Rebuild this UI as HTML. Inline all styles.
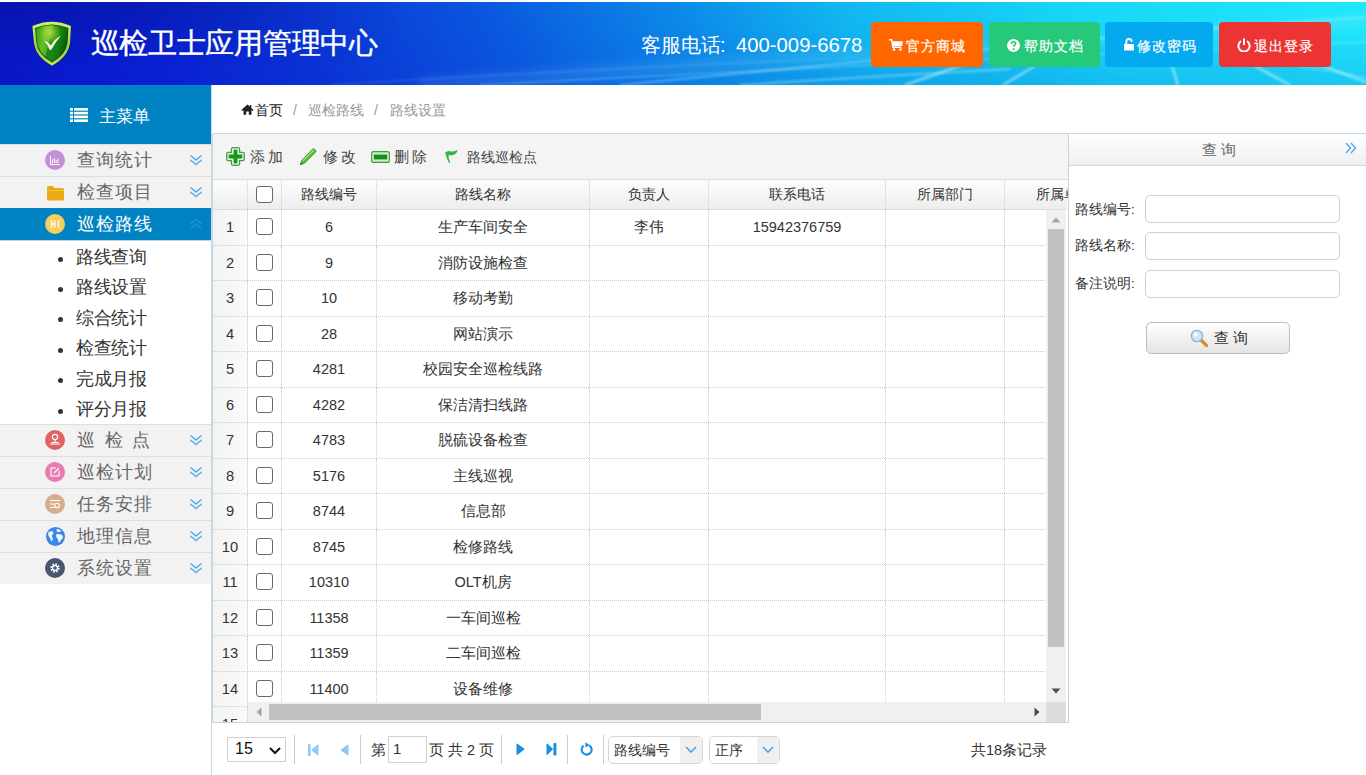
<!DOCTYPE html>
<html><head><meta charset="utf-8"><style>
*{margin:0;padding:0;box-sizing:border-box}
html,body{width:1366px;height:775px;overflow:hidden;background:#fff;font-family:"Liberation Sans",sans-serif;color:#333}
.abs{position:absolute}
#hdr{position:absolute;left:0;top:2px;width:1366px;height:83px;overflow:hidden;
 background:linear-gradient(60deg,#0818c8 1.7%,#0a20d2 12%,#0a32d4 22.9%,#0a56de 37.1%,#0c8ae8 51.2%,#12b6f1 62.5%,#18d6f7 78.8%,#20e6fb 98.3%)}
#hdr .title{position:absolute;left:90.5px;top:21px;font-size:28.5px;letter-spacing:-0.28px;-webkit-text-stroke:0.35px #fff;color:#fff;white-space:nowrap;line-height:40px}
#hdr .phone{position:absolute;left:641px;top:30.5px;font-size:20.3px;color:#fff;white-space:nowrap;line-height:24px}
.hbtn{position:absolute;top:20px;height:45px;border-radius:4px;color:#fff;font-size:14px;line-height:49px;white-space:nowrap}
.hbtn span{position:absolute;top:0;-webkit-text-stroke:0.2px #fff;letter-spacing:0.9px}
.hbtn svg{position:absolute}
#side{position:absolute;left:0;top:85px;width:212px;height:690px;background:#fff;border-right:1px solid #c9dbe6}
.mhead{position:absolute;left:0;top:0;width:211px;height:59px;background:#0082c3;color:#fff;font-size:17.3px}
.mi{position:absolute;left:0;width:211px;height:32px;background:#f2f2f2;border-top:1px solid #dedede;color:#666;font-size:17.5px;letter-spacing:1px}
.mi .ic{position:absolute;left:45px;top:5px;width:20px;height:20px;border-radius:50%}
.mi .tx{position:absolute;left:77px;top:0;line-height:31px;white-space:nowrap}
.mi .ch{position:absolute;left:189px;top:9px;width:14px;height:12px}
.mi.act{background:#0082c3;color:#fff;border-top:1px solid #0082c3;border-bottom:1px solid #b9d3e0;height:33px}
.sub{position:absolute;left:76px;font-size:18px;letter-spacing:-0.4px;color:#333;white-space:nowrap;line-height:30px}
.sub:before{content:"";position:absolute;left:-18px;top:14.5px;width:5px;height:5px;border-radius:50%;background:#333}
#crumb{position:absolute;left:213px;top:85px;width:1153px;height:49px;border-bottom:1px solid #c5d6e2;font-size:14px;line-height:51px}
#crumb .home{position:absolute;left:28px;top:19px}
#crumb span{position:absolute;top:0;white-space:nowrap}
#grid{position:absolute;left:212px;top:134px;width:857px;height:589px;border-left:1px solid #c5d6e2;border-right:1px solid #d0d0d0;border-bottom:1px solid #d0d0d0;overflow:hidden}
#tb{position:absolute;left:0;top:0;width:856px;height:46px;background:#f4f4f4;border-bottom:1px solid #dddddd;font-size:14.5px;color:#444}
#tb span{position:absolute;top:14px;line-height:18px;white-space:nowrap;letter-spacing:3px}
#gh{position:absolute;left:0;top:46px;width:854px;height:30px;background:linear-gradient(#fdfdfd,#ededed);border-bottom:1px solid #dcdcdc;font-size:14px;color:#333}
.gc{position:absolute;top:0;height:100%;border-right:1px dotted #ccc;text-align:center;white-space:nowrap;overflow:hidden}
#gh .gc{line-height:29px}
.row{position:absolute;left:35px;width:799px;height:35.5px;border-bottom:1px dotted #ccc;font-size:14.5px;color:#333}
.row .gc{line-height:34px}
.rn{position:absolute;left:0;width:35px;height:35.5px;border-bottom:1px dotted #ccc;border-right:1px dotted #ccc;background:linear-gradient(90deg,#f3f3f3,#fafafa);font-size:14.7px;color:#333;line-height:34px;text-align:center}
.ck{position:absolute;left:8px;width:17px;height:17px;border:1.6px solid #6a6a6a;border-radius:3px;background:#fff}
#sp{position:absolute;left:1069px;top:134px;width:297px;height:641px;background:#fff}
#sp .ph{position:absolute;left:0;top:0;width:297px;height:32px;background:linear-gradient(#ffffff,#efefef);border-bottom:1px solid #d4d4d4;text-align:center;font-size:14.5px;color:#666;line-height:33px;letter-spacing:4px;text-indent:6px}
#sp .lb{position:absolute;left:6px;font-size:13.5px;color:#333;white-space:nowrap;line-height:16px}
#sp .ip{position:absolute;left:76px;width:195px;height:28px;border:1px solid #cfcfcf;border-radius:5px;background:#fff}
#sp .btn{position:absolute;left:77px;top:188px;width:144px;height:32px;border:1px solid #bdbdbd;border-radius:5px;background:linear-gradient(#ffffff,#e4e4e4);font-size:14.5px;color:#333;letter-spacing:4px}
#pg{position:absolute;left:213px;top:723px;width:855px;height:52px;font-size:14.5px;color:#333}
#pg .sep{position:absolute;top:12px;width:1px;height:29px;background:#ccc}
#pg span{position:absolute;top:18px;line-height:18px;white-space:nowrap}
.cb{position:absolute;top:13px;height:28px;border:1px solid #d6d6d6;border-radius:5px;background:#fff;overflow:hidden}
.cb .arr{position:absolute;right:0;top:0;width:22px;height:100%;background:#f0f0f0}
</style></head><body>
<div id="hdr"><div class="abs" style="left:600px;top:0;width:766px;height:83px;background:linear-gradient(to bottom,rgba(0,60,200,0) 30%,rgba(0,60,200,0.16) 100%);-webkit-mask-image:linear-gradient(to right,transparent 0%,#000 45%)"></div><div class="abs" style="left:0;top:0;width:400px;height:83px;background:linear-gradient(to bottom,rgba(0,0,60,0.2) 0%,rgba(0,0,60,0) 75%);-webkit-mask-image:linear-gradient(to right,#000 40%,transparent 100%)"></div><svg class="abs" style="left:0;top:0" width="1366" height="83" viewBox="0 0 1366 83">
<defs><filter id="bl" x="-10%" y="-50%" width="120%" height="200%"><feGaussianBlur stdDeviation="1.1"/></filter>
<filter id="bl2" x="-10%" y="-50%" width="120%" height="200%"><feGaussianBlur stdDeviation="5"/></filter></defs>
<g fill="none" stroke="#c8f6ff">
<path d="M420 83 Q800 55 1366 20" stroke-width="14" opacity="0.10" filter="url(#bl2)"/>
<path d="M480 83 Q760 68 1010 56 T1366 40" stroke-width="1.5" opacity="0.30" filter="url(#bl)"/>
<path d="M620 83 Q820 64 1010 45 T1366 15" stroke-width="2.2" opacity="0.35" filter="url(#bl)"/>
<path d="M740 83 Q880 74 1010 67" stroke-width="2.5" opacity="0.35" filter="url(#bl)"/>
<path d="M330 83 Q600 66 900 54" stroke-width="1.2" opacity="0.18" filter="url(#bl)"/>
<g opacity="0.55" stroke-width="2.6" filter="url(#bl)">
<path d="M905 83 L965 62"/>
<path d="M1003 83 L1035 64"/>
<path d="M1178 83 L1172 64"/>
<path d="M1290 83 L1255 64"/>
<path d="M1366 80 L1318 62"/>
</g>
<path d="M1300 64 Q1340 70 1366 76" stroke-width="2" opacity="0.3" filter="url(#bl)"/>
</g></svg><svg class="abs" style="left:31px;top:17px" width="42" height="49" viewBox="0 0 42 49">
<defs>
<linearGradient id="sg1" x1="0" y1="0" x2="1" y2="0.3"><stop offset="0" stop-color="#2f9d1c"/><stop offset="0.35" stop-color="#62c028"/><stop offset="0.5" stop-color="#4cb022"/><stop offset="0.52" stop-color="#1e8a14"/><stop offset="0.8" stop-color="#148012"/><stop offset="1" stop-color="#0c5e0c"/></linearGradient>
<linearGradient id="sg2" x1="0" y1="0" x2="0" y2="1"><stop offset="0" stop-color="#d4ee70"/><stop offset="0.6" stop-color="#9ad23a"/><stop offset="1" stop-color="#c0e060"/></linearGradient>
<radialGradient id="sg3" cx="0.45" cy="0.2" r="0.35"><stop offset="0" stop-color="#b8e040" stop-opacity="0.9"/><stop offset="1" stop-color="#b8e040" stop-opacity="0"/></radialGradient>
</defs>
<path d="M1.4 7 Q21 -1.5 40 7 L39 24 Q37 38 21 46.7 Q5 38 3 24 Z" fill="#06104a" opacity="0.45" transform="translate(0.3,1.2)"/>
<path d="M1.4 7 Q21 -1.5 40 7 L39 24 Q37 38 21 46.7 Q5 38 3 24 Z" fill="url(#sg2)"/>
<path d="M4 9 Q21 1.8 37.4 9 L36.5 24 Q34.8 35.8 21 43.6 Q7.2 35.8 5.5 24 Z" fill="#0f4a0c"/>
<path d="M4.9 9.7 Q21 2.8 36.5 9.7 L35.7 24 Q34 35 21 42.5 Q8 35 6.3 24 Z" fill="url(#sg1)"/>
<path d="M4.9 9.7 Q21 2.8 36.5 9.7 L35.7 24 Q34 35 21 42.5 Q8 35 6.3 24 Z" fill="url(#sg3)"/>
<path d="M13 21.8 Q16.5 22 19.8 26.6 Q23.5 20 30 16.6 Q25 22.5 20.2 31 L18.6 31 Q16.5 25 13 21.8 Z" fill="#f2f6d6"/>
</svg>
 <div class="title">巡检卫士应用管理中心</div>
 <div class="phone">客服电话<span style="position:absolute;left:79px;top:0">:</span><span style="position:absolute;left:95px;top:0">400-009-6678</span></div>
 <div class="hbtn" style="left:871px;width:112px;background:#ff6600"><svg style="left:18px;top:17px" width="14" height="12" viewBox="0 0 14 12"><path d="M0 0.8 H2.6 L4 8.2 H12.5" fill="none" stroke="#fff" stroke-width="1.5"/><path d="M3.2 2.2 H14 L13.2 7 H4.1 Z" fill="#fff"/><circle cx="5" cy="10.6" r="1.3" fill="#fff"/><circle cx="11.5" cy="10.6" r="1.3" fill="#fff"/></svg><span style="left:35px">官方商城</span></div>
 <div class="hbtn" style="left:989px;width:111px;background:#26c97a"><svg style="left:18px;top:17px" width="13" height="13" viewBox="0 0 13 13"><circle cx="6.5" cy="6.5" r="6.5" fill="#fff"/><path d="M4.4 4.9 Q4.4 2.8 6.5 2.8 Q8.6 2.8 8.6 4.6 Q8.6 5.7 7.4 6.3 Q6.6 6.7 6.6 7.8" fill="none" stroke="#26c97a" stroke-width="1.6"/><circle cx="6.6" cy="9.9" r="1" fill="#26c97a"/></svg><span style="left:35px">帮助文档</span></div>
 <div class="hbtn" style="left:1105px;width:108px;background:#04a9ef"><svg style="left:19px;top:16px" width="10" height="13" viewBox="0 0 10 13"><path d="M2.3 6 V3.8 Q2.3 1 5 1 Q7.7 1 7.7 3.8" fill="none" stroke="#fff" stroke-width="1.8"/><rect x="0" y="6" width="10" height="6.5" fill="#fff"/></svg><span style="left:32px">修改密码</span></div>
 <div class="hbtn" style="left:1219px;width:112px;background:#ec3434"><svg style="left:18px;top:16px" width="14" height="14" viewBox="0 0 14 14"><path d="M4 3.2 A5.6 5.6 0 1 0 10 3.2" fill="none" stroke="#fff" stroke-width="2"/><path d="M7 0.5 V7" stroke="#fff" stroke-width="2"/></svg><span style="left:35px">退出登录</span></div>
</div>
<div id="side"><div class="mhead"><svg class="abs" style="left:70px;top:23px" width="18" height="14" viewBox="0 0 18 14"><g fill="#fff"><rect x="0" y="0" width="3" height="2.6"/><rect x="4" y="0" width="14" height="2.6"/><rect x="0" y="3.8" width="3" height="2.6"/><rect x="4" y="3.8" width="14" height="2.6"/><rect x="0" y="7.6" width="3" height="2.6"/><rect x="4" y="7.6" width="14" height="2.6"/><rect x="0" y="11.4" width="3" height="2.6"/><rect x="4" y="11.4" width="14" height="2.6"/></g></svg><span class="abs" style="left:99px;top:17px;line-height:28px;white-space:nowrap">主菜单</span></div><div class="mi" style="top:59px"><div class="ic" style="background:#c48fd4"><svg class="abs" style="left:5px;top:5px" width="10" height="10" viewBox="0 0 10 10"><path d="M0.5 1 V9.5 H9.5 M2.5 4.5 V8 M4.3 3 V8 M6.1 5 V8 M7.9 3.5 V8" stroke="#fff" stroke-width="1" fill="none"/></svg></div><span class="tx">查询统计</span><svg class="ch" viewBox="0 0 14 12"><path d="M1.5 1.5 L7 6 L12.5 1.5 M1.5 6 L7 10.5 L12.5 6" fill="none" stroke="#55abea" stroke-width="1.6"/></svg></div><div class="mi" style="top:91px"><svg class="abs" style="left:46px;top:8px" width="19" height="16" viewBox="0 0 19 16"><path d="M1 2.5 Q1 1 2.5 1 H7 L8.5 3 H16.5 Q18 3 18 4.5 V14 Q18 15.5 16.5 15.5 H2.5 Q1 15.5 1 14 Z" fill="#e9ab12"/><path d="M1 5.5 H18" stroke="#f6c84a" stroke-width="0.8"/></svg><span class="tx">检查项目</span><svg class="ch" viewBox="0 0 14 12"><path d="M1.5 1.5 L7 6 L12.5 1.5 M1.5 6 L7 10.5 L12.5 6" fill="none" stroke="#55abea" stroke-width="1.6"/></svg></div><div class="mi act" style="top:123px"><div class="ic" style="background:#f5cf5a"><svg class="abs" style="left:5px;top:5px" width="10" height="10" viewBox="0 0 10 10"><path d="M1.5 1 V9 M5 1 V9 M8.5 1 V9 M3.2 3 V7" stroke="#fff" stroke-width="1.1" fill="none"/></svg></div><span class="tx">巡检路线</span><svg class="ch" viewBox="0 0 14 12"><path d="M1.5 10.5 L7 6 L12.5 10.5 M1.5 6 L7 1.5 L12.5 6" fill="none" stroke="#1a95d6" stroke-width="1.5"/></svg></div><div class="sub" style="top:157.0px">路线查询</div><div class="sub" style="top:187.4px">路线设置</div><div class="sub" style="top:217.8px">综合统计</div><div class="sub" style="top:248.2px">检查统计</div><div class="sub" style="top:278.6px">完成月报</div><div class="sub" style="top:309.0px">评分月报</div><div class="mi" style="top:339px"><div class="ic" style="background:#de6462"><svg class="abs" style="left:4px;top:3px" width="12" height="13" viewBox="0 0 12 13"><circle cx="6" cy="4" r="2.6" fill="none" stroke="#fff" stroke-width="1.1"/><path d="M6 6.6 V9 M1 11 H11 M2.5 9.5 H9.5" stroke="#fff" stroke-width="1.1"/></svg></div><span class="tx"><span style="letter-spacing:9.5px">巡检点</span></span><svg class="ch" viewBox="0 0 14 12"><path d="M1.5 1.5 L7 6 L12.5 1.5 M1.5 6 L7 10.5 L12.5 6" fill="none" stroke="#55abea" stroke-width="1.6"/></svg></div><div class="mi" style="top:371px"><div class="ic" style="background:#e67cb0"><svg class="abs" style="left:5px;top:5px" width="10" height="10" viewBox="0 0 10 10"><path d="M6 1 H1 V9 H9 V4" fill="none" stroke="#fff" stroke-width="1.1"/><path d="M4 6 L9 1" stroke="#fff" stroke-width="1.1"/></svg></div><span class="tx">巡检计划</span><svg class="ch" viewBox="0 0 14 12"><path d="M1.5 1.5 L7 6 L12.5 1.5 M1.5 6 L7 10.5 L12.5 6" fill="none" stroke="#55abea" stroke-width="1.6"/></svg></div><div class="mi" style="top:403px"><div class="ic" style="background:#d6ac8c"><svg class="abs" style="left:4px;top:5px" width="12" height="10" viewBox="0 0 12 10"><path d="M1 1.5 H11 M1 5 H5 M1 8.5 H5" stroke="#fff" stroke-width="1.1"/><circle cx="8" cy="6.5" r="2.3" fill="none" stroke="#fff" stroke-width="1.1"/></svg></div><span class="tx">任务安排</span><svg class="ch" viewBox="0 0 14 12"><path d="M1.5 1.5 L7 6 L12.5 1.5 M1.5 6 L7 10.5 L12.5 6" fill="none" stroke="#55abea" stroke-width="1.6"/></svg></div><div class="mi" style="top:435px"><svg class="abs" style="left:45.5px;top:5.5px" width="19" height="19" viewBox="0 0 20 20"><circle cx="10" cy="10" r="10" fill="#3a86ea"/><path d="M2.5 5.5 Q5 3.5 7.5 5 Q8.5 6.5 7 8 Q5.5 8.5 6.5 10.5 Q8 12 6.5 14.5 Q5.5 16 5 13.5 Q4.5 11 3 10 Q2 8 2.5 5.5 Z M11 2.2 Q14 2 16 4 Q15.5 5.5 13.5 5 Q12 6 11.5 4.5 Z M10.5 8 Q13 6.5 16 8 Q18.5 9.5 17.5 12 Q16 12.5 15.5 14.5 Q14 17 13 16 Q13.5 13.5 12 12 Q10.5 11 10.5 8 Z" fill="#f4f8ff"/></svg><span class="tx">地理信息</span><svg class="ch" viewBox="0 0 14 12"><path d="M1.5 1.5 L7 6 L12.5 1.5 M1.5 6 L7 10.5 L12.5 6" fill="none" stroke="#55abea" stroke-width="1.6"/></svg></div><div class="mi" style="top:467px"><div class="ic" style="background:#4a566e"><svg class="abs" style="left:4px;top:4px" width="12" height="12" viewBox="0 0 12 12"><circle cx="6" cy="6" r="3.6" fill="none" stroke="#fff" stroke-width="2.2" stroke-dasharray="1.6 1.2"/><circle cx="6" cy="6" r="2.4" fill="none" stroke="#fff" stroke-width="1.2"/></svg></div><span class="tx">系统设置</span><svg class="ch" viewBox="0 0 14 12"><path d="M1.5 1.5 L7 6 L12.5 1.5 M1.5 6 L7 10.5 L12.5 6" fill="none" stroke="#55abea" stroke-width="1.6"/></svg></div></div>
<div id="crumb"><svg class="home" width="13" height="11" viewBox="0 0 13 11"><path d="M6.5 0.5 L0.3 6 L1.5 7 L2.5 6.1 V10.8 H5.2 V7.6 H7.8 V10.8 H10.5 V6.1 L11.5 7 L12.7 6 L10.3 3.9 V1 H8.8 V2.6 Z" fill="#222"/></svg><span style="left:42px;color:#222">首页</span><span style="left:80px;color:#999">/</span><span style="left:95px;color:#999">巡检路线</span><span style="left:161px;color:#999">/</span><span style="left:177px;color:#999">路线设置</span></div>
<div id="grid"><div id="tb">
<svg class="abs" style="left:13px;top:12.5px" width="19" height="19" viewBox="0 0 19 19"><path d="M5.4 2.4 Q5.4 0.7 7.1 0.7 H11.9 Q13.6 0.7 13.6 2.4 V5.4 H16.6 Q18.3 5.4 18.3 7.1 V11.9 Q18.3 13.6 16.6 13.6 H13.6 V16.6 Q13.6 18.3 11.9 18.3 H7.1 Q5.4 18.3 5.4 16.6 V13.6 H2.4 Q0.7 13.6 0.7 11.9 V7.1 Q0.7 5.4 2.4 5.4 H5.4 Z" fill="#e4f2e0" stroke="#4f9a48" stroke-width="1.3"/><path d="M7.6 3.4 Q7.6 2.6 8.4 2.6 H10.6 Q11.4 2.6 11.4 3.4 V7.6 H15.6 Q16.4 7.6 16.4 8.4 V10.6 Q16.4 11.4 15.6 11.4 H11.4 V15.6 Q11.4 16.4 10.6 16.4 H8.4 Q7.6 16.4 7.6 15.6 V11.4 H3.4 Q2.6 11.4 2.6 10.6 V8.4 Q2.6 7.6 3.4 7.6 H7.6 Z" fill="#129a1c"/></svg>
<span style="left:37px">添加</span>
<svg class="abs" style="left:86px;top:14px" width="18" height="18" viewBox="0 0 18 18"><path d="M13.6 1.2 Q14.5 0.4 15.4 1.2 L16.6 2.4 Q17.4 3.3 16.6 4.1 L5.6 15.1 L1.2 16.8 L2.9 12.4 Z" fill="#56c23a" stroke="#2f8a2a" stroke-width="0.9"/><path d="M4 12.6 L14.6 2" stroke="#a6e870" stroke-width="1.1"/><path d="M1.2 16.8 L2.2 14.2 L3.8 15.8 Z" fill="#3a7a30"/></svg>
<span style="left:110px">修改</span>
<svg class="abs" style="left:158px;top:16.7px" width="19" height="12" viewBox="0 0 19 12"><rect x="0.6" y="0.6" width="17.8" height="10.8" rx="2" fill="#cfe9c9" stroke="#3f9a3f" stroke-width="1.1"/><rect x="2.8" y="3.6" width="13.4" height="4.8" fill="#11911a"/></svg>
<span style="left:181px">删除</span>
<svg class="abs" style="left:231px;top:15px" width="15" height="16" viewBox="0 0 15 16"><path d="M1.2 3.6 Q3.5 1.2 6.5 2.2 Q9.5 3.2 13.8 0.8 Q12.5 5.5 8.6 6.2 Q6 6.6 4.6 6 Q4 9 6.2 13.5 L5.2 14.2 Q2.2 9.5 1.2 3.6 Z" fill="#33b840"/></svg>
<span style="left:254px;letter-spacing:0;font-size:14px">路线巡检点</span>
</div><div id="gh"><div class="gc" style="left:0px;width:35px"></div><div class="gc" style="left:35px;width:34px"><div class="ck" style="top:5.5px"></div></div><div class="gc" style="left:69px;width:95px">路线编号</div><div class="gc" style="left:164px;width:213px">路线名称</div><div class="gc" style="left:377px;width:119px">负责人</div><div class="gc" style="left:496px;width:177px">联系电话</div><div class="gc" style="left:673px;width:119px">所属部门</div><div class="gc" style="left:792px;width:119px">所属单位</div></div><div class="rn" style="top:76.0px">1</div><div class="row" style="top:76.0px"><div class="gc" style="left:0px;width:34px"><div class="ck" style="top:8px"></div></div><div class="gc" style="left:34px;width:95px">6</div><div class="gc" style="left:129px;width:213px">生产车间安全</div><div class="gc" style="left:342px;width:119px">李伟</div><div class="gc" style="left:461px;width:177px">15942376759</div><div class="gc" style="left:638px;width:119px"></div><div class="gc" style="left:757px;width:119px"></div></div><div class="rn" style="top:111.5px">2</div><div class="row" style="top:111.5px"><div class="gc" style="left:0px;width:34px"><div class="ck" style="top:8px"></div></div><div class="gc" style="left:34px;width:95px">9</div><div class="gc" style="left:129px;width:213px">消防设施检查</div><div class="gc" style="left:342px;width:119px"></div><div class="gc" style="left:461px;width:177px"></div><div class="gc" style="left:638px;width:119px"></div><div class="gc" style="left:757px;width:119px"></div></div><div class="rn" style="top:147.0px">3</div><div class="row" style="top:147.0px"><div class="gc" style="left:0px;width:34px"><div class="ck" style="top:8px"></div></div><div class="gc" style="left:34px;width:95px">10</div><div class="gc" style="left:129px;width:213px">移动考勤</div><div class="gc" style="left:342px;width:119px"></div><div class="gc" style="left:461px;width:177px"></div><div class="gc" style="left:638px;width:119px"></div><div class="gc" style="left:757px;width:119px"></div></div><div class="rn" style="top:182.5px">4</div><div class="row" style="top:182.5px"><div class="gc" style="left:0px;width:34px"><div class="ck" style="top:8px"></div></div><div class="gc" style="left:34px;width:95px">28</div><div class="gc" style="left:129px;width:213px">网站演示</div><div class="gc" style="left:342px;width:119px"></div><div class="gc" style="left:461px;width:177px"></div><div class="gc" style="left:638px;width:119px"></div><div class="gc" style="left:757px;width:119px"></div></div><div class="rn" style="top:218.0px">5</div><div class="row" style="top:218.0px"><div class="gc" style="left:0px;width:34px"><div class="ck" style="top:8px"></div></div><div class="gc" style="left:34px;width:95px">4281</div><div class="gc" style="left:129px;width:213px">校园安全巡检线路</div><div class="gc" style="left:342px;width:119px"></div><div class="gc" style="left:461px;width:177px"></div><div class="gc" style="left:638px;width:119px"></div><div class="gc" style="left:757px;width:119px"></div></div><div class="rn" style="top:253.5px">6</div><div class="row" style="top:253.5px"><div class="gc" style="left:0px;width:34px"><div class="ck" style="top:8px"></div></div><div class="gc" style="left:34px;width:95px">4282</div><div class="gc" style="left:129px;width:213px">保洁清扫线路</div><div class="gc" style="left:342px;width:119px"></div><div class="gc" style="left:461px;width:177px"></div><div class="gc" style="left:638px;width:119px"></div><div class="gc" style="left:757px;width:119px"></div></div><div class="rn" style="top:289.0px">7</div><div class="row" style="top:289.0px"><div class="gc" style="left:0px;width:34px"><div class="ck" style="top:8px"></div></div><div class="gc" style="left:34px;width:95px">4783</div><div class="gc" style="left:129px;width:213px">脱硫设备检查</div><div class="gc" style="left:342px;width:119px"></div><div class="gc" style="left:461px;width:177px"></div><div class="gc" style="left:638px;width:119px"></div><div class="gc" style="left:757px;width:119px"></div></div><div class="rn" style="top:324.5px">8</div><div class="row" style="top:324.5px"><div class="gc" style="left:0px;width:34px"><div class="ck" style="top:8px"></div></div><div class="gc" style="left:34px;width:95px">5176</div><div class="gc" style="left:129px;width:213px">主线巡视</div><div class="gc" style="left:342px;width:119px"></div><div class="gc" style="left:461px;width:177px"></div><div class="gc" style="left:638px;width:119px"></div><div class="gc" style="left:757px;width:119px"></div></div><div class="rn" style="top:360.0px">9</div><div class="row" style="top:360.0px"><div class="gc" style="left:0px;width:34px"><div class="ck" style="top:8px"></div></div><div class="gc" style="left:34px;width:95px">8744</div><div class="gc" style="left:129px;width:213px">信息部</div><div class="gc" style="left:342px;width:119px"></div><div class="gc" style="left:461px;width:177px"></div><div class="gc" style="left:638px;width:119px"></div><div class="gc" style="left:757px;width:119px"></div></div><div class="rn" style="top:395.5px">10</div><div class="row" style="top:395.5px"><div class="gc" style="left:0px;width:34px"><div class="ck" style="top:8px"></div></div><div class="gc" style="left:34px;width:95px">8745</div><div class="gc" style="left:129px;width:213px">检修路线</div><div class="gc" style="left:342px;width:119px"></div><div class="gc" style="left:461px;width:177px"></div><div class="gc" style="left:638px;width:119px"></div><div class="gc" style="left:757px;width:119px"></div></div><div class="rn" style="top:431.0px">11</div><div class="row" style="top:431.0px"><div class="gc" style="left:0px;width:34px"><div class="ck" style="top:8px"></div></div><div class="gc" style="left:34px;width:95px">10310</div><div class="gc" style="left:129px;width:213px">OLT机房</div><div class="gc" style="left:342px;width:119px"></div><div class="gc" style="left:461px;width:177px"></div><div class="gc" style="left:638px;width:119px"></div><div class="gc" style="left:757px;width:119px"></div></div><div class="rn" style="top:466.5px">12</div><div class="row" style="top:466.5px"><div class="gc" style="left:0px;width:34px"><div class="ck" style="top:8px"></div></div><div class="gc" style="left:34px;width:95px">11358</div><div class="gc" style="left:129px;width:213px">一车间巡检</div><div class="gc" style="left:342px;width:119px"></div><div class="gc" style="left:461px;width:177px"></div><div class="gc" style="left:638px;width:119px"></div><div class="gc" style="left:757px;width:119px"></div></div><div class="rn" style="top:502.0px">13</div><div class="row" style="top:502.0px"><div class="gc" style="left:0px;width:34px"><div class="ck" style="top:8px"></div></div><div class="gc" style="left:34px;width:95px">11359</div><div class="gc" style="left:129px;width:213px">二车间巡检</div><div class="gc" style="left:342px;width:119px"></div><div class="gc" style="left:461px;width:177px"></div><div class="gc" style="left:638px;width:119px"></div><div class="gc" style="left:757px;width:119px"></div></div><div class="rn" style="top:537.5px">14</div><div class="row" style="top:537.5px"><div class="gc" style="left:0px;width:34px"><div class="ck" style="top:8px"></div></div><div class="gc" style="left:34px;width:95px">11400</div><div class="gc" style="left:129px;width:213px">设备维修</div><div class="gc" style="left:342px;width:119px"></div><div class="gc" style="left:461px;width:177px"></div><div class="gc" style="left:638px;width:119px"></div><div class="gc" style="left:757px;width:119px"></div></div><div class="rn" style="top:573.0px">15</div><div class="abs" style="left:833px;top:76px;width:20px;height:492px;background:#f0f0f0"></div>
<div class="abs" style="left:835px;top:95px;width:16px;height:418px;background:#c1c1c1"></div>
<svg class="abs" style="left:838px;top:83px" width="10" height="6" viewBox="0 0 10 6"><path d="M0.5 5.5 L5 0.5 L9.5 5.5Z" fill="#a3a3a3"/></svg>
<svg class="abs" style="left:838px;top:554px" width="10" height="6" viewBox="0 0 10 6"><path d="M0.5 0.5 L5 5.5 L9.5 0.5Z" fill="#505050"/></svg>
<div class="abs" style="left:35px;top:568px;width:799px;height:20px;background:#f0f0f0"></div>
<div class="abs" style="left:56px;top:570px;width:492px;height:16px;background:#c1c1c1"></div>
<svg class="abs" style="left:43px;top:573px" width="6" height="10" viewBox="0 0 6 10"><path d="M5.5 0.5 L0.5 5 L5.5 9.5Z" fill="#a3a3a3"/></svg>
<svg class="abs" style="left:821px;top:573px" width="6" height="10" viewBox="0 0 6 10"><path d="M0.5 0.5 L5.5 5 L0.5 9.5Z" fill="#505050"/></svg>
<div class="abs" style="left:833px;top:568px;width:20px;height:20px;background:#dcdcdc"></div></div>
<div id="sp">
<div class="ph">查询</div>
<svg class="abs" style="left:276px;top:8px" width="12" height="12" viewBox="0 0 12 12"><path d="M1 1 L5.5 6 L1 11 M6 1 L10.5 6 L6 11" fill="none" stroke="#4ea6ea" stroke-width="1.3"/></svg>
<div class="lb" style="top:68px">路线编号:</div><div class="ip" style="top:61px"></div>
<div class="lb" style="top:104px">路线名称:</div><div class="ip" style="top:98px"></div>
<div class="lb" style="top:142px">备注说明:</div><div class="ip" style="top:136px"></div>
<div class="btn"><svg class="abs" style="left:43px;top:5.5px" width="18" height="18" viewBox="0 0 18 18"><path d="M11 11 L16.5 16.5" stroke="#d98a2b" stroke-width="3.2" stroke-linecap="round"/><circle cx="7" cy="7" r="5.6" fill="#cfe6f8" stroke="#8db4d6" stroke-width="1.4"/><circle cx="5.6" cy="5.4" r="2.2" fill="#fff" opacity="0.8"/></svg><span class="abs" style="left:67px;top:6px;line-height:18px">查询</span></div>
</div>
<div id="pg">
<div class="abs" style="left:14px;top:14px;width:59px;height:25px;border:1px solid #d0d0d0;background:#fff"></div>
<span style="left:22px;top:17px;font-size:16px;color:#111">15</span>
<svg class="abs" style="left:56px;top:24px" width="12" height="8" viewBox="0 0 12 8"><path d="M1 1 L6 6 L11 1" fill="none" stroke="#111" stroke-width="2"/></svg>
<div class="sep" style="left:81px"></div>
<svg class="abs" style="left:95px;top:20.5px" width="11" height="13" viewBox="0 0 11 13"><rect x="0" y="0" width="2.6" height="12" rx="0.8" fill="#8ec9f0"/><path d="M10.5 1.2 Q10.5 0 9.5 0.7 L3.6 5.4 Q2.8 6 3.6 6.6 L9.5 11.3 Q10.5 12 10.5 10.8 Z" fill="#8ec9f0"/></svg>
<svg class="abs" style="left:127px;top:20.5px" width="9" height="13" viewBox="0 0 9 13"><path d="M8.5 1.2 Q8.5 0 7.5 0.7 L0.9 5.4 Q0.1 6 0.9 6.6 L7.5 11.3 Q8.5 12 8.5 10.8 Z" fill="#8ec9f0"/></svg>
<div class="sep" style="left:147px"></div>
<span style="left:158px">第</span>
<div class="abs" style="left:175px;top:13px;width:39px;height:27px;border:1px solid #d0d0d0;background:#fff"></div>
<span style="left:180px;top:17px;font-size:15px">1</span>
<span style="left:216px;letter-spacing:0px">页 共 2 页</span>
<div class="sep" style="left:288px"></div>
<svg class="abs" style="left:303px;top:20px" width="9" height="13" viewBox="0 0 9 13"><path d="M0.5 1.2 Q0.5 0 1.5 0.7 L8.1 5.6 Q8.9 6.2 8.1 6.8 L1.5 11.8 Q0.5 12.5 0.5 11.3 Z" fill="#1e8fe0"/></svg>
<svg class="abs" style="left:333px;top:20px" width="11" height="13" viewBox="0 0 11 13"><path d="M0.5 1.2 Q0.5 0 1.5 0.7 L6.6 5.6 Q7.4 6.2 6.6 6.8 L1.5 11.8 Q0.5 12.5 0.5 11.3 Z" fill="#1e8fe0"/><rect x="7.4" y="0" width="3" height="12.5" rx="0.8" fill="#1e8fe0"/></svg>
<div class="sep" style="left:354px"></div>
<svg class="abs" style="left:367px;top:18.5px" width="13" height="14" viewBox="0 0 13 14"><path d="M3.6 3.6 A5 5 0 1 0 9.2 3.3" fill="none" stroke="#1e8fe0" stroke-width="2.1"/><path d="M5.2 0.2 L9.6 3 L5.6 5.6 Z" fill="#1e8fe0"/></svg>
<div class="sep" style="left:390px"></div>
<div class="cb" style="left:395px;width:95px"><span style="left:5px;top:4px;font-size:14px">路线编号</span><div class="arr"><svg class="abs" style="left:5px;top:9px" width="12" height="8" viewBox="0 0 12 8"><path d="M1 1 L6 6 L11 1" fill="none" stroke="#4aa6e6" stroke-width="1.6"/></svg></div></div>
<div class="cb" style="left:496px;width:71px"><span style="left:5px;top:4px;font-size:14px">正序</span><div class="arr"><svg class="abs" style="left:5px;top:9px" width="12" height="8" viewBox="0 0 12 8"><path d="M1 1 L6 6 L11 1" fill="none" stroke="#4aa6e6" stroke-width="1.6"/></svg></div></div>
<span style="left:758px">共18条记录</span>
</div>
</body></html>
